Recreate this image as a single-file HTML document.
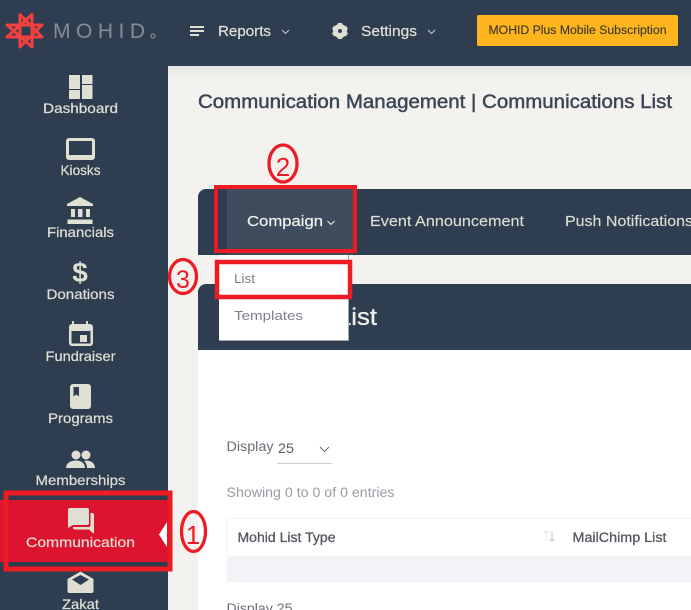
<!DOCTYPE html>
<html>
<head>
<meta charset="utf-8">
<style>
html,body{margin:0;padding:0;width:691px;height:610px;overflow:hidden;background:#f3f2ee}
svg{display:block}
text{font-family:"Liberation Sans",sans-serif}
.nav{fill:#e0dfd3;stroke:#e0dfd3;stroke-width:.2;font-size:14px;text-anchor:middle}
.m{stroke:#e0dfd3;stroke-width:.2}
</style>
</head>
<body>
<svg width="691" height="610" viewBox="0 0 691 610" xmlns="http://www.w3.org/2000/svg">
<defs>
<linearGradient id="sh" x1="0" y1="0" x2="0" y2="1"><stop offset="0" stop-color="#e6e5e1"/><stop offset="1" stop-color="#f3f2ee"/></linearGradient>
</defs>
<rect width="691" height="610" fill="#f3f2ee"/>
<rect x="168" y="66" width="523" height="12" fill="url(#sh)"/>
<rect width="691" height="66" fill="#2e3e50"/>
<rect y="0" width="168" height="610" fill="#2e3e50"/>

<!-- logo -->
<path d="M20 14.500 L42 37 L7 37 L32 14.500 L32 47 L7 25 L42 25 L20 47 Z" fill="none" stroke="#f4403f" stroke-width="3" stroke-linejoin="round"/>
<text x="53" y="38" font-size="21" fill="#868d93" textLength="92" lengthAdjust="spacing">MOHID</text>
<circle cx="153" cy="36" r="2" fill="none" stroke="#868d93" stroke-width="1.200"/>

<!-- top nav -->
<g fill="#e0dfd3">
<rect x="190" y="26" width="14" height="2"/><rect x="190" y="30" width="14" height="2"/><rect x="190" y="34" width="9" height="2"/>
<text class="m" x="218" y="36" font-size="14.500" textLength="53" lengthAdjust="spacingAndGlyphs">Reports</text>
<circle cx="340" cy="31" r="4.500" fill="none" stroke="#e0dfd3" stroke-width="5"/>
<path d="M338 23h4l.6 2h-5.200zM338 39h4l.6-2h-5.200zM332 29l2-3.400 2 1-2.500 3.500zM348 29l-2-3.400-2 1 2.500 3.500zM332 33l2 3.400 2-1-2.500-3.500zM348 33l-2 3.400-2-1 2.500-3.500z"/>
<text class="m" x="361" y="36" font-size="14.500" textLength="56" lengthAdjust="spacingAndGlyphs">Settings</text>
</g>
<path d="M282 30l3.500 3.500 3.500-3.500M428 30l3.500 3.500 3.500-3.500" fill="none" stroke="#c9cbc6" stroke-width="1"/>
<rect x="477" y="15" width="201" height="31" rx="2" fill="#ffb61e"/>
<text x="488.500" y="34" font-size="11.500" fill="#3f3b2a" stroke="#3f3b2a" stroke-width=".15" textLength="178" lengthAdjust="spacingAndGlyphs">MOHID Plus Mobile Subscription</text>

<!-- title -->
<text x="198" y="108" font-size="19" fill="#3b4556" stroke="#3b4556" stroke-width=".45" textLength="474" lengthAdjust="spacingAndGlyphs">Communication Management | Communications List</text>

<!-- sidebar items -->
<g fill="#e0dfd3">
<!-- dashboard -->
<rect x="69" y="75" width="11" height="14"/><rect x="82" y="75" width="10.500" height="9"/><rect x="69" y="90" width="11" height="9"/><rect x="82" y="85" width="10.500" height="14"/>
<!-- kiosk -->
<path fill-rule="evenodd" d="M69 138h23a3 3 0 0 1 3 3v16a3 3 0 0 1-3 3H69a3 3 0 0 1-3-3v-16a3 3 0 0 1 3-3zM69 141v14h23v-14z"/>
<!-- bank -->
<path d="M80 197l13 7v2H67v-2zM71 209h4v8h-4zM78 209h4.500v8H78zM86 209h4v8h-4zM67.500 219.500h25v4.500h-25z"/>
<!-- calendar -->
<path fill-rule="evenodd" d="M72 324v-3h2v3h12v-3h2v3h2a3 3 0 0 1 3 3v16a3 3 0 0 1-3 3H72a3 3 0 0 1-3-3v-16a3 3 0 0 1 3-3zM71.500 331v12.500h19V331zM80 335h7v7h-7z"/>
<!-- book -->
<path fill-rule="evenodd" d="M73 384h15a3 3 0 0 1 3 3v19a3 3 0 0 1-3 3H73a3 3 0 0 1-3-3v-19a3 3 0 0 1 3-3zM73.500 387v9.500l2.800-2 2.700 2V387z"/>
<!-- people -->
<circle cx="76" cy="455" r="4.500"/><circle cx="86" cy="455" r="4.500"/>
<path d="M66 468c0-5 5-7.500 10-7.500s9 2.500 9 7.500zM87 468c0-3-1-5-3-7 5-1.500 11 1 11 7z"/>
<!-- zakat -->
<path fill-rule="evenodd" d="M80.500 571.500l13 7.500v12a2 2 0 0 1-2 2H69.500a2 2 0 0 1-2-2v-12zM72 579.500l8.500 5.500 8.500-5.500-8.500-4.500z"/>
</g>
<text x="80" y="282" font-size="28" font-weight="700" fill="#e0dfd3" text-anchor="middle">$</text>
<text x="80.500" y="113" class="nav" textLength="75" lengthAdjust="spacingAndGlyphs">Dashboard</text>
<text x="80.500" y="175" class="nav" textLength="40" lengthAdjust="spacingAndGlyphs">Kiosks</text>
<text x="80.500" y="237" class="nav" textLength="67" lengthAdjust="spacingAndGlyphs">Financials</text>
<text x="80.500" y="299" class="nav" textLength="68" lengthAdjust="spacingAndGlyphs">Donations</text>
<text x="80.500" y="361" class="nav" textLength="70" lengthAdjust="spacingAndGlyphs">Fundraiser</text>
<text x="80.500" y="423" class="nav" textLength="65" lengthAdjust="spacingAndGlyphs">Programs</text>
<text x="80.500" y="485" class="nav" textLength="90" lengthAdjust="spacingAndGlyphs">Memberships</text>
<text x="80.500" y="609" class="nav" textLength="37" lengthAdjust="spacingAndGlyphs">Zakat</text>

<!-- active sidebar -->
<rect x="0" y="500" width="168" height="62" fill="#dc1430"/>
<path d="M70 508h17a2 2 0 0 1 2 2v13a2 2 0 0 1-2 2H73l-5 3v-18a2 2 0 0 1 2-2z" fill="#e0dfd3"/>
<path d="M73 527h15a2 2 0 0 0 2.500-2v-12h1.500a2 2 0 0 1 2 2v19l-5-4.500H75a2 2 0 0 1-2-2z" fill="#e0dfd3"/>
<text x="80.500" y="547" class="nav" textLength="109" lengthAdjust="spacingAndGlyphs">Communication</text>
<path d="M167 522v25l-8-12.500z" fill="#fff"/>
<rect x="6" y="493" width="164" height="76" fill="none" stroke="#ed1c24" stroke-width="5"/>

<!-- tab bar -->
<path d="M206 189H691V255H198V197a8 8 0 0 1 8-8z" fill="#2e3e50"/>
<rect x="227" y="189" width="126" height="66" fill="#3e4c5e"/>
<text x="247" y="226" font-size="14.500" fill="#f2f2ec" stroke="#f2f2ec" stroke-width=".2" textLength="76" lengthAdjust="spacingAndGlyphs">Compaign</text>
<path d="M327.500 221l3.500 3.500 3.500-3.500" fill="none" stroke="#f2f2ec" stroke-width="1"/>
<text x="370" y="226" font-size="14.500" fill="#dcdcd2" stroke="#dcdcd2" stroke-width=".15" textLength="154" lengthAdjust="spacingAndGlyphs">Event Announcement</text>
<text x="565" y="226" font-size="14.500" fill="#dcdcd2" stroke="#dcdcd2" stroke-width=".15" textLength="128" lengthAdjust="spacingAndGlyphs">Push Notifications</text>

<!-- content card -->
<rect x="198" y="350" width="493" height="260" fill="#fff"/>
<path d="M206 284H691V350H198V292a8 8 0 0 1 8-8z" fill="#2e3e50"/>
<text x="337" y="325" font-size="24" fill="#f2f2ec" stroke="#f2f2ec" stroke-width=".3" textLength="40" lengthAdjust="spacingAndGlyphs">List</text>

<!-- dropdown -->
<rect x="219" y="255" width="130" height="86" fill="#a6a8ac"/>
<rect x="219" y="255" width="129" height="85" fill="#fff"/>
<text x="234" y="283" font-size="13" fill="#7d7f88" textLength="21" lengthAdjust="spacingAndGlyphs">List</text>
<text x="234" y="320" font-size="13" fill="#7d7f88" textLength="69" lengthAdjust="spacingAndGlyphs">Templates</text>

<!-- table area -->
<text x="226.500" y="451" font-size="13.500" fill="#6c6e78" textLength="47" lengthAdjust="spacingAndGlyphs">Display</text>
<text x="278" y="453" font-size="13.500" fill="#5a5c66" textLength="16" lengthAdjust="spacingAndGlyphs">25</text>
<path d="M320 447l4.500 4.500 4.500-4.500" fill="none" stroke="#5e6e7e" stroke-width="1"/>
<rect x="277" y="463" width="55" height="1" fill="#d0cfd2"/>
<text x="226.500" y="497" font-size="13.500" fill="#9a9ba3" textLength="168" lengthAdjust="spacingAndGlyphs">Showing 0 to 0 of 0 entries</text>
<rect x="227" y="518.500" width="480" height="38" fill="#fff" stroke="#f1f1f3" stroke-width="1"/>
<rect x="227" y="556" width="464" height="26" fill="#f2f3f7"/>
<text x="237.500" y="542" font-size="13.500" fill="#555861" stroke="#555861" stroke-width=".3" textLength="98" lengthAdjust="spacingAndGlyphs">Mohid List Type</text>
<text x="572.500" y="542" font-size="13.500" fill="#555861" stroke="#555861" stroke-width=".3" textLength="94" lengthAdjust="spacingAndGlyphs">MailChimp List</text>
<path d="M546 541v-10M544 533l2-2.500 2 2.500" fill="none" stroke="#e4e6ea" stroke-width="1"/>
<path d="M552 531v10M550 539l2 2.500 2-2.500" fill="none" stroke="#c4c6cc" stroke-width="1"/>
<text x="226.500" y="613" font-size="13.500" fill="#6c6e78" textLength="66" lengthAdjust="spacingAndGlyphs">Display 25</text>

<!-- annotations -->
<rect x="216" y="187" width="139" height="64" fill="none" stroke="#ed1c24" stroke-width="4"/>
<rect x="217" y="262" width="133" height="35" fill="none" stroke="#ed1c24" stroke-width="4.500"/>
<ellipse cx="193.500" cy="531.500" rx="12" ry="20" fill="none" stroke="#ed1c24" stroke-width="3.300"/>
<text x="193" y="544" font-size="26" fill="#ed1c24" text-anchor="middle">1</text>
<ellipse cx="283" cy="163.500" rx="14" ry="18.500" fill="none" stroke="#ed1c24" stroke-width="3.300"/>
<text x="283" y="176" font-size="26" fill="#ed1c24" text-anchor="middle">2</text>
<ellipse cx="183" cy="276.500" rx="13.500" ry="17" fill="none" stroke="#ed1c24" stroke-width="3.300"/>
<text x="183" y="288" font-size="25" fill="#ed1c24" text-anchor="middle">3</text>
</svg>
</body>
</html>
